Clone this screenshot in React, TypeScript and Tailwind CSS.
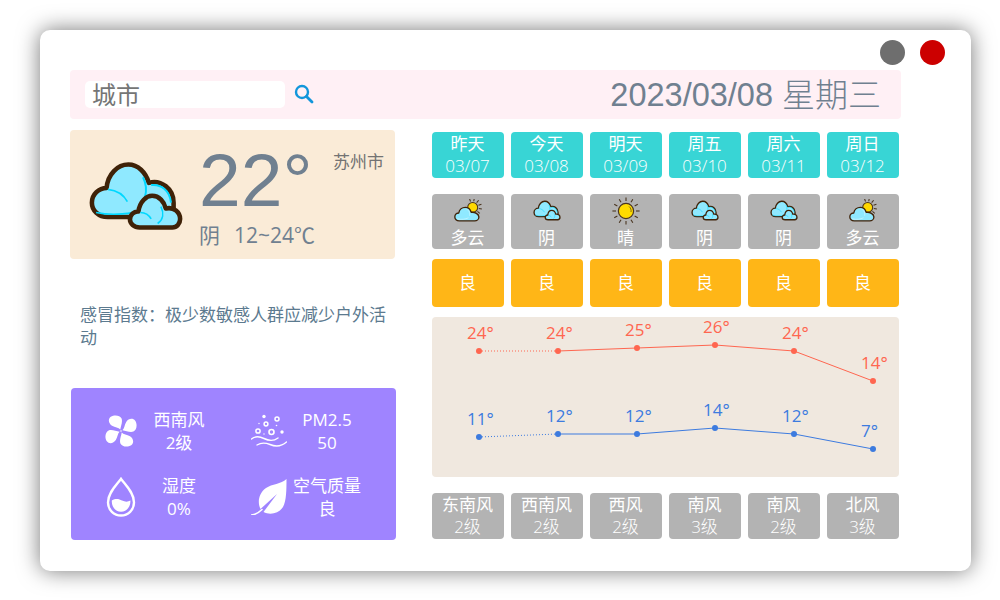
import React from "react";

const font = { fontFamily: '"Open Sans","Noto Sans CJK SC",sans-serif' };

function CloudPair({ className }: { className?: string }) {
  return (
    <svg viewBox="172 420 293 215" className={className}>
      <path d="M232 592C203 592 183 572 183 548C183 522 205 503 228 503C232 460 262 431 295 431C325 431 348 455 358 487C395 476 434 505 434 548L434 592Z" fill="#8fe9ff" stroke="#3f2208" strokeWidth="14" strokeLinejoin="round" />
      <path d="M340 470C350 490 352 510 346 530M365 494C395 490 422 510 426 548" fill="none" stroke="#00d8ff" strokeWidth="6" />
      <path d="M232 507C258 510 280 522 292 545M196 578C250 590 310 580 335 572" fill="none" stroke="#00d8ff" strokeWidth="5" />
      <path d="M330 624C312 624 300 612 300 600C300 585 312 574 326 575C330 545 350 527 368 527C390 527 405 545 410 566C435 560 454 578 454 598C454 612 444 624 430 624Z" fill="#8fe9ff" stroke="#3f2208" strokeWidth="14" strokeLinejoin="round" />
      <path d="M395 560C405 580 402 600 385 612M332 578C345 578 358 585 365 598" fill="none" stroke="#00d8ff" strokeWidth="5" />
    </svg>
  );
}

function SunCloud({ className }: { className?: string }) {
  const rays = [-80, -50, -20, 10, 40, -110];
  return (
    <svg viewBox="0 0 27 22" className={className}>
      <g stroke="#4a3520" strokeWidth="1">
        {rays.map((a) => (
          <line key={a} x1={18 + 6 * Math.cos((a * Math.PI) / 180)} y1={8 + 6 * Math.sin((a * Math.PI) / 180)} x2={18 + 9 * Math.cos((a * Math.PI) / 180)} y2={8 + 9 * Math.sin((a * Math.PI) / 180)} />
        ))}
      </g>
      <circle cx="18" cy="8" r="4.8" fill="#ffd800" stroke="#4a3520" strokeWidth="1" />
      <path d="M5 21C2.5 21 .8 19.2 .8 17.2C.8 15 2.6 13.4 4.6 13.4C5.2 10 8 8 10.8 8C13.6 8 15.8 10 16.6 12.8C20 12.2 24 14.6 24 17.2C24 19.4 22 21 20 21Z" fill="#8fe9ff" stroke="#3f2208" strokeWidth="1.3" strokeLinejoin="round" />
      <path d="M12 9.5C15 11 15.5 14 15 16M3 19C7 20 11 19.5 14 18" fill="none" stroke="#c5f5ff" strokeWidth="0.8" />
    </svg>
  );
}

function Sun({ className }: { className?: string }) {
  const rays = [0, 30, 60, 90, 120, 150, 180, 210, 240, 270, 300, 330];
  return (
    <svg viewBox="0 0 28 28" className={className}>
      <g stroke="#4a3520" strokeWidth="1.1">
        {rays.map((a) => (
          <line key={a} x1={14 + 10 * Math.cos((a * Math.PI) / 180)} y1={14 + 10 * Math.sin((a * Math.PI) / 180)} x2={14 + 13.6 * Math.cos((a * Math.PI) / 180)} y2={14 + 13.6 * Math.sin((a * Math.PI) / 180)} />
        ))}
      </g>
      <circle cx="14" cy="14" r="7.6" fill="#ffdc00" stroke="#4a3520" strokeWidth="1.2" />
      <path d="M17 9.5C18.8 10.8 19.4 13 19 15" fill="none" stroke="#4a3520" strokeWidth="0.7" />
    </svg>
  );
}

function Fan() {
  return (
    <svg viewBox="0 0 32 32" className="w-[32px] h-[32px] ml-[4px]" fill="#fff">
      {[0, 90, 180, 270].map((r) => (
        <path key={r} transform={`rotate(${r} 16 16)`} d="M15.3 14.6C13.6 12.6 10 12.6 7 10.8C3.6 8.6 2.6 4.2 5.8 1.8C9.4 -.6 15 .2 16.6 3.6C17.8 7 15.8 11 15.3 14.6Z" />
      ))}
      <circle cx="16" cy="16" r="0.8" />
    </svg>
  );
}

function Pm() {
  return (
    <svg viewBox="0 0 36 34" className="w-[36px] h-[34px] ml-[2px]" fill="none" stroke="#fff">
      <circle cx="13" cy="2.5" r="1.7" fill="#fff" stroke="none" />
      <circle cx="26" cy="5" r="2" strokeWidth="1.5" />
      <circle cx="15" cy="10" r="1.9" strokeWidth="1.5" />
      <circle cx="8" cy="9.5" r="0.7" fill="#fff" stroke="none" />
      <circle cx="25.5" cy="11.5" r="0.8" fill="#fff" stroke="none" />
      <circle cx="7" cy="17" r="2.1" strokeWidth="1.5" />
      <circle cx="20.5" cy="18" r="2.5" strokeWidth="1.6" />
      <circle cx="31" cy="18" r="1.7" fill="#fff" stroke="none" />
      <circle cx="13" cy="20" r="0.7" fill="#fff" stroke="none" />
      <path d="M.5 25C4 22 8 22 13 24.5C18 27 23 27 27 24" strokeWidth="1.4" strokeLinecap="round" />
      <path d="M6 31C10 28.5 14 28.5 19 30.5C25 33 31 32 35.5 28" strokeWidth="1.4" strokeLinecap="round" />
    </svg>
  );
}

function Drop() {
  return (
    <svg viewBox="0 0 30 40" className="w-[30px] h-[40px] ml-[5px]">
      <path d="M15 1.8C11.5 7 2 15 2 25.5C2 33 8 38.5 15 38.5C22 38.5 28 33 28 25.5C28 15 18.5 7 15 1.8Z" fill="none" stroke="#fff" strokeWidth="2.4" />
      <path d="M5.8 23.5C10 21 13 22 16 23.5C19 25 22 25 24.4 23.5C24.8 30 20.5 34.8 15 34.8C9.5 34.8 5.4 30 5.8 23.5Z" fill="#fff" />
    </svg>
  );
}

function Leaf() {
  return (
    <svg viewBox="0 0 36 36" className="w-[36px] h-[36px] ml-[2px] shrink-0">
      <path d="M35.5 0C35.5 10 35.5 22 32 28C28 34.5 19 36.5 12.5 33L26 15L9.5 30C6 23 8 14 15 9C21 5 30 5 35.5 0Z" fill="#fff" />
      <path d="M.5 36C5 35.5 8 33.5 11 30.5" fill="none" stroke="#fff" strokeWidth="1.6" strokeLinecap="round" />
    </svg>
  );
}

const days = [
  ["昨天", "03/07", "多云", "良", "东南风", "2级"],
  ["今天", "03/08", "阴", "良", "西南风", "2级"],
  ["明天", "03/09", "晴", "良", "西风", "2级"],
  ["周五", "03/10", "阴", "良", "南风", "3级"],
  ["周六", "03/11", "阴", "良", "南风", "2级"],
  ["周日", "03/12", "多云", "良", "北风", "3级"],
];

const xs = [47, 126, 205, 283, 362, 441];
const high = [34, 34, 31, 28, 34, 64];
const low = [120, 117, 117, 111, 117, 132];
const highText = ["24°", "24°", "25°", "26°", "24°", "14°"];
const lowText = ["11°", "12°", "12°", "14°", "12°", "7°"];

function Line({ ys, labels, color, textColor }: { ys: number[]; labels: string[]; color: string; textColor: string }) {
  return (
    <g>
      <line x1={xs[0]} y1={ys[0]} x2={xs[1]} y2={ys[1]} stroke={color} strokeWidth="1" strokeDasharray="1 2" />
      <polyline points={xs.slice(1).map((x, i) => `${x},${ys[i + 1]}`).join(" ")} fill="none" stroke={color} strokeWidth="1" />
      {xs.map((x, i) => (
        <g key={x}>
          <circle cx={x} cy={ys[i]} r="3" fill={color} />
          <text x={x - 12} y={ys[i] - 12} fontSize="17" fill={textColor}>{labels[i]}</text>
        </g>
      ))}
    </g>
  );
}

function Stat({ icon, a, b }: { icon: React.ReactNode; a: string; b: string }) {
  return (
    <div className="grid grid-cols-[43px_70px] items-center h-[46px]">
      <div className="flex items-center">{icon}</div>
      <div className="text-center leading-[23px] whitespace-nowrap">
        <div>{a}</div>
        <div>{b}</div>
      </div>
    </div>
  );
}

export default function App() {
  return (
    <div className="w-[1000px] h-[600px] overflow-hidden bg-white pt-[30px] pl-[40px] text-[17px]" style={font}>
      <div className="w-[931px] h-[541px] bg-white rounded-[10px] shadow-[0_0_22px_#777] px-[30px] pt-[10px]">
        <div className="flex justify-end gap-[15px] h-[25px] mr-[-4px]">
          <div className="w-[25px] h-[25px] rounded-full bg-[#6e6e6e]" />
          <div className="w-[25px] h-[25px] rounded-full bg-[#cc0000]" />
        </div>
        <div className="mt-[5px] h-[49px] w-[831px] bg-[#fff0f5] rounded-[4px] flex items-center pl-[15px] pr-[20px]">
          <input readOnly placeholder="城市" className="w-[200px] h-[27px] bg-white rounded-[5px] pl-[7px] pr-[6px] text-[24px] placeholder-[#757575] outline-none" />
          <svg viewBox="0 0 20 20" className="w-[20px] h-[20px] ml-[9px] mt-[-1px]" fill="none" stroke="#1296db">
            <circle cx="8" cy="8" r="6" strokeWidth="2.4" />
            <line x1="12.5" y1="12.5" x2="18" y2="18" strokeWidth="2.8" strokeLinecap="round" />
          </svg>
          <div className="ml-auto text-[#708090] whitespace-nowrap flex items-center h-[40px] leading-[40px]">
            <span className="text-[32.5px]" style={{ fontFamily: '"Liberation Sans",sans-serif' }}>2023/03/08</span>
            <span className="ml-[9px] mt-[-4px] text-[33px] font-extralight" style={{ fontFamily: '"Noto Sans CJK SC",sans-serif' }}>星期三</span>
          </div>
        </div>
        <div className="flex gap-[37px] mt-[11px]">
          <div className="w-[325px]">
            <div className="h-[129px] bg-[#faebd7] rounded-[4px] flex text-[#708090] pl-[18px]">
              <CloudPair className="w-[96px] h-[70px] mt-[31px] shrink-0" />
              <div className="ml-[15px] flex flex-col">
                <div className="text-[75px] leading-[74px] mt-[13px]" style={{ fontFamily: '"Liberation Sans",sans-serif' }}>22°</div>
                <div className="flex items-center text-[21px] h-[26px] mt-[5px] leading-[26px] whitespace-nowrap">
                  <span>阴</span>
                  <span className="ml-[14px]">12~24℃</span>
                </div>
              </div>
              <div className="ml-auto mr-[11px] mt-[20px] leading-[24px] text-[#737373]">苏州市</div>
            </div>
            <div className="mt-[44px] pl-[10px] w-[325px] leading-[23px] text-[#5c7a8f]">
              感冒指数：极少数敏感人群应减少户外活动
            </div>
            <div className="mt-[39px] ml-px w-[325px] h-[152px] bg-[#9f84ff] rounded-[4px] text-white pl-[30px] pt-[20px] grid grid-cols-[113px_113px] gap-x-[35px] gap-y-[20px] content-start">
              <Stat icon={<Fan />} a="西南风" b="2级" />
              <Stat icon={<Pm />} a="PM2.5" b="50" />
              <Stat icon={<Drop />} a="湿度" b="0%" />
              <Stat icon={<Leaf />} a="空气质量" b="良" />
            </div>
          </div>
          <div className="w-[467px] pt-[2px] text-white">
            <div className="flex gap-[7px]">
              {days.map((d) => (
                <div key={d[0]} className="w-[72px] h-[46px] rounded-[4px] bg-[#38d5d5] text-center leading-[22px] pt-px pr-px">
                  <div>{d[0]}</div>
                  <div className="font-light">{d[1]}</div>
                </div>
              ))}
            </div>
            <div className="flex gap-[7px] mt-[16px]">
              {days.map((d) => (
                <div key={d[0]} className="w-[72px] h-[55px] rounded-[4px] bg-[#b3b3b3] flex flex-col items-center pr-px">
                  <div className="h-[33px] flex items-center">
                    {d[2] === "多云" ? <SunCloud className="w-[28px] h-[23px]" /> : d[2] === "晴" ? <Sun className="w-[28px] h-[28px]" /> : <CloudPair className="w-[28px] h-[21px]" />}
                  </div>
                  <div className="leading-[22px]">{d[2]}</div>
                </div>
              ))}
            </div>
            <div className="flex gap-[7px] mt-[10px]">
              {days.map((d) => (
                <div key={d[0]} className="w-[72px] h-[48px] rounded-[4px] bg-[#ffb617] flex items-center justify-center pr-px">{d[3]}</div>
              ))}
            </div>
            <div className="mt-[10px] h-[160px] rounded-[4px] bg-[#f0e8df]">
              <svg viewBox="0 0 467 160" className="w-[467px] h-[160px] block">
                <Line ys={high} labels={highText} color="#ff6650" textColor="#ff6650" />
                <Line ys={low} labels={lowText} color="#3d7bdf" textColor="#3d7bdf" />
              </svg>
            </div>
            <div className="flex gap-[7px] mt-[16px]">
              {days.map((d) => (
                <div key={d[0]} className="w-[72px] h-[46px] rounded-[4px] bg-[#b3b3b3] text-center leading-[22px] pt-px pr-px">
                  <div>{d[4]}</div>
                  <div className="font-light">{d[5]}</div>
                </div>
              ))}
            </div>
          </div>
        </div>
      </div>
    </div>
  );
}
